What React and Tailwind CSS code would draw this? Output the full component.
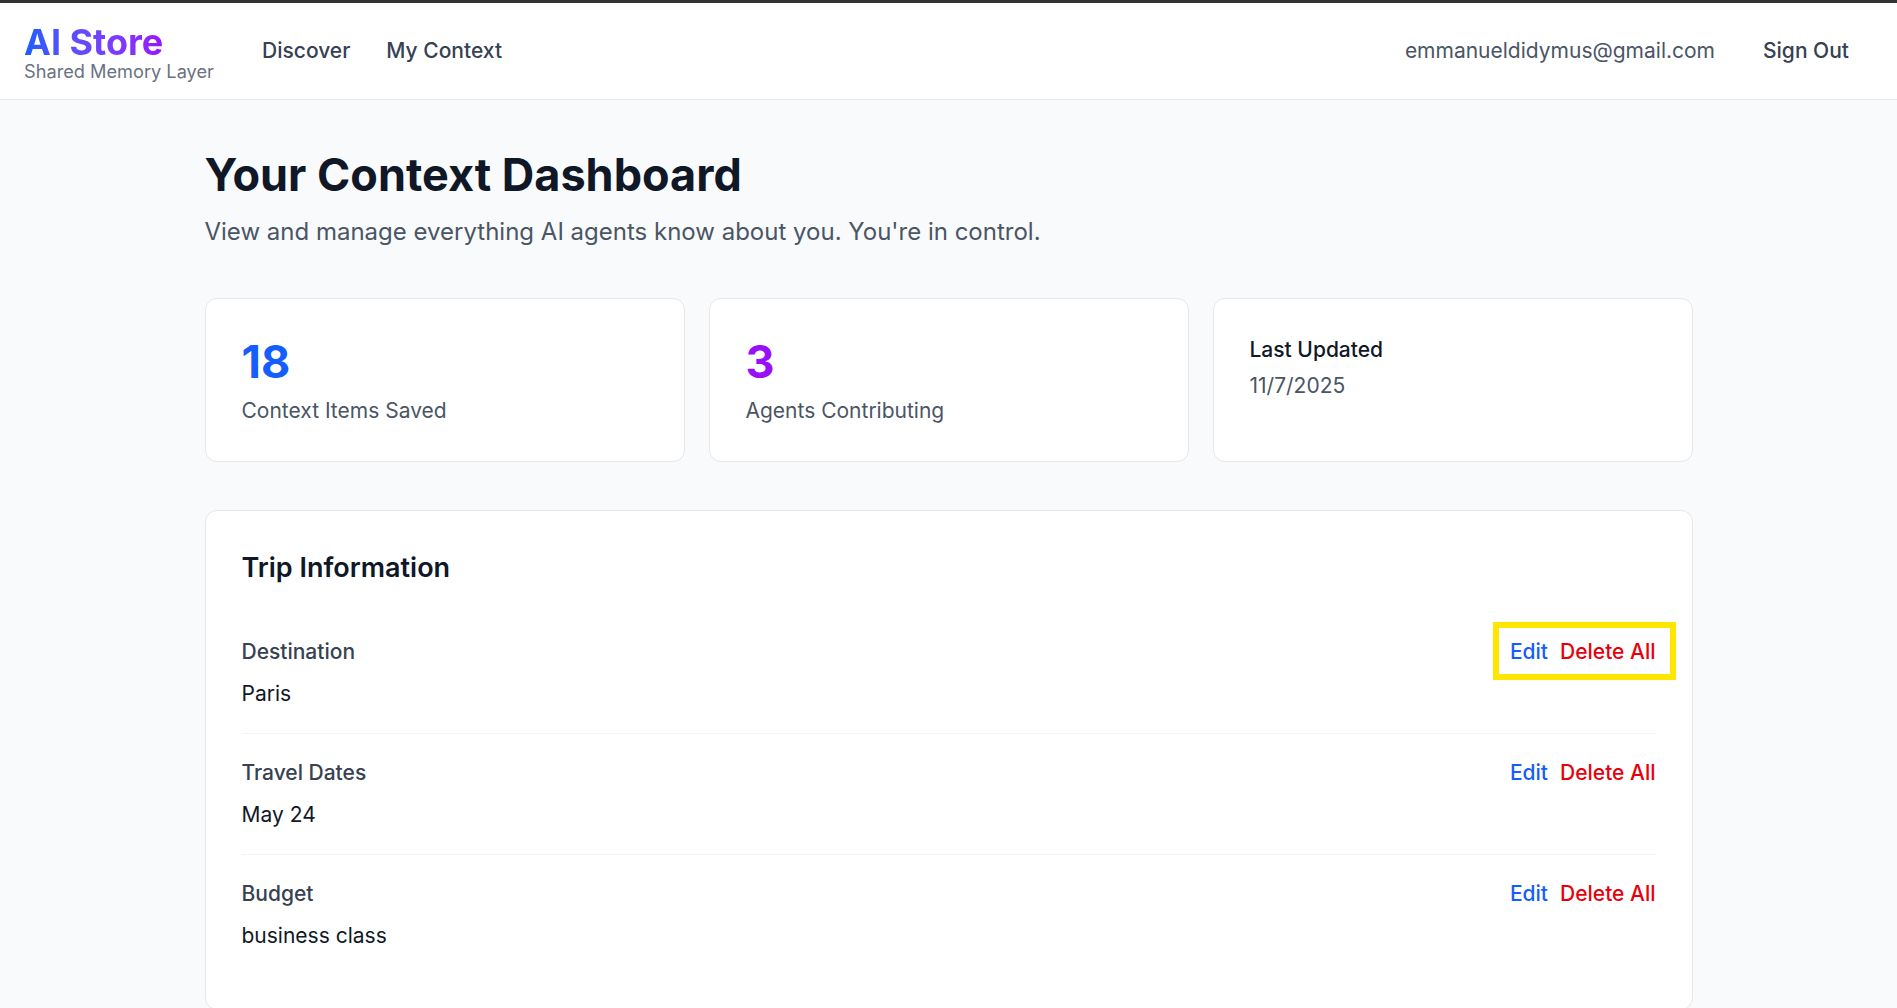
const rows = [
  { label: "Destination", value: "Paris", highlight: true },
  { label: "Travel Dates", value: "May 24" },
  { label: "Budget", value: "business class" },
];

const Stat = ({ children }) => (
  <div className="h-[164px] rounded-[12px] border border-[#e5e7eb] bg-white px-[36px] pt-[36px]">
    {children}
  </div>
);

const Row = ({ label, value, highlight, last }) => (
  <div className={`flex items-start justify-between pt-[24px] h-[121px] ${last ? "" : "border-b border-[#f3f4f6]"}`}>
    <div>
      <div className="text-[21px] leading-[30px] font-medium text-[#374151]">{label}</div>
      <div className="mt-[12px] text-[21px] leading-[30px] text-[#111827]">{value}</div>
    </div>
    <div className="relative flex gap-[12px] text-[21px] leading-[30px] font-medium">
      {highlight && (
        <div className="absolute -left-[17px] -right-[20px] -top-[15px] -bottom-[13px] border-[6px] border-[#ffe600]" />
      )}
      <button className="text-[#155dfc]">Edit</button>
      <button className="text-[#e7000b]">Delete All</button>
    </div>
  </div>
);

export default function App() {
  return (
    <div className="h-[1008px] overflow-hidden bg-[#f9fafb] font-['Inter',sans-serif]">
      <div className="h-[3px] bg-[#333333]" />
      <header className="flex h-[97px] items-center justify-between border-b border-[#e5e7eb] bg-white pl-[24px] pr-[48px]">
        <div className="flex items-center">
          <div className="w-[190px]">
            <div className="w-max bg-gradient-to-r from-[#155dfc] to-[#9810fa] bg-clip-text text-[36px] leading-[40px] font-bold text-transparent">
              AI Store
            </div>
            <div className="whitespace-nowrap text-[18.2px] leading-[18px] text-[#6a7282]">Shared Memory Layer</div>
          </div>
          <nav className="ml-[48px] flex gap-[36px] text-[21px] font-medium text-[#364153]">
            <a>Discover</a>
            <a>My Context</a>
          </nav>
        </div>
        <div className="flex items-center gap-[48px] text-[21px]">
          <span className="text-[#4a5565]">emmanueldidymus@gmail.com</span>
          <button className="font-medium text-[#364153]">Sign Out</button>
        </div>
      </header>

      <main className="mx-auto w-[1488px] pt-[50px]">
        <h1 className="text-[45px] leading-[50px] font-bold text-[#101828]">Your Context Dashboard</h1>
        <p className="mt-[16px] text-[24px] leading-[32px] text-[#4a5565]">
          View and manage everything AI agents know about you. You're in control.
        </p>

        <div className="mt-[50px] grid grid-cols-3 gap-[24px]">
          <Stat>
            <div className="text-[45px] leading-[54px] font-bold text-[#155dfc]">18</div>
            <div className="mt-[7px] text-[21px] leading-[30px] text-[#4a5565]">Context Items Saved</div>
          </Stat>
          <Stat>
            <div className="text-[45px] leading-[54px] font-bold text-[#9810fa]">3</div>
            <div className="mt-[7px] text-[21px] leading-[30px] text-[#4a5565]">Agents Contributing</div>
          </Stat>
          <Stat>
            <div className="text-[21px] leading-[30px] font-medium text-[#101828]">Last Updated</div>
            <div className="mt-[6px] text-[21px] leading-[30px] text-[#4a5565]">11/7/2025</div>
          </Stat>
        </div>

        <section className="mt-[48px] rounded-[12px] border border-[#e5e7eb] bg-white px-[36px] pt-[39px] pb-[33px]">
          <h2 className="text-[27px] leading-[36px] font-semibold text-[#101828]">Trip Information</h2>
          <div className="mt-[27px]">
            {rows.map((row, i) => (
              <Row key={row.label} {...row} last={i === rows.length - 1} />
            ))}
          </div>
        </section>
      </main>
    </div>
  );
}
